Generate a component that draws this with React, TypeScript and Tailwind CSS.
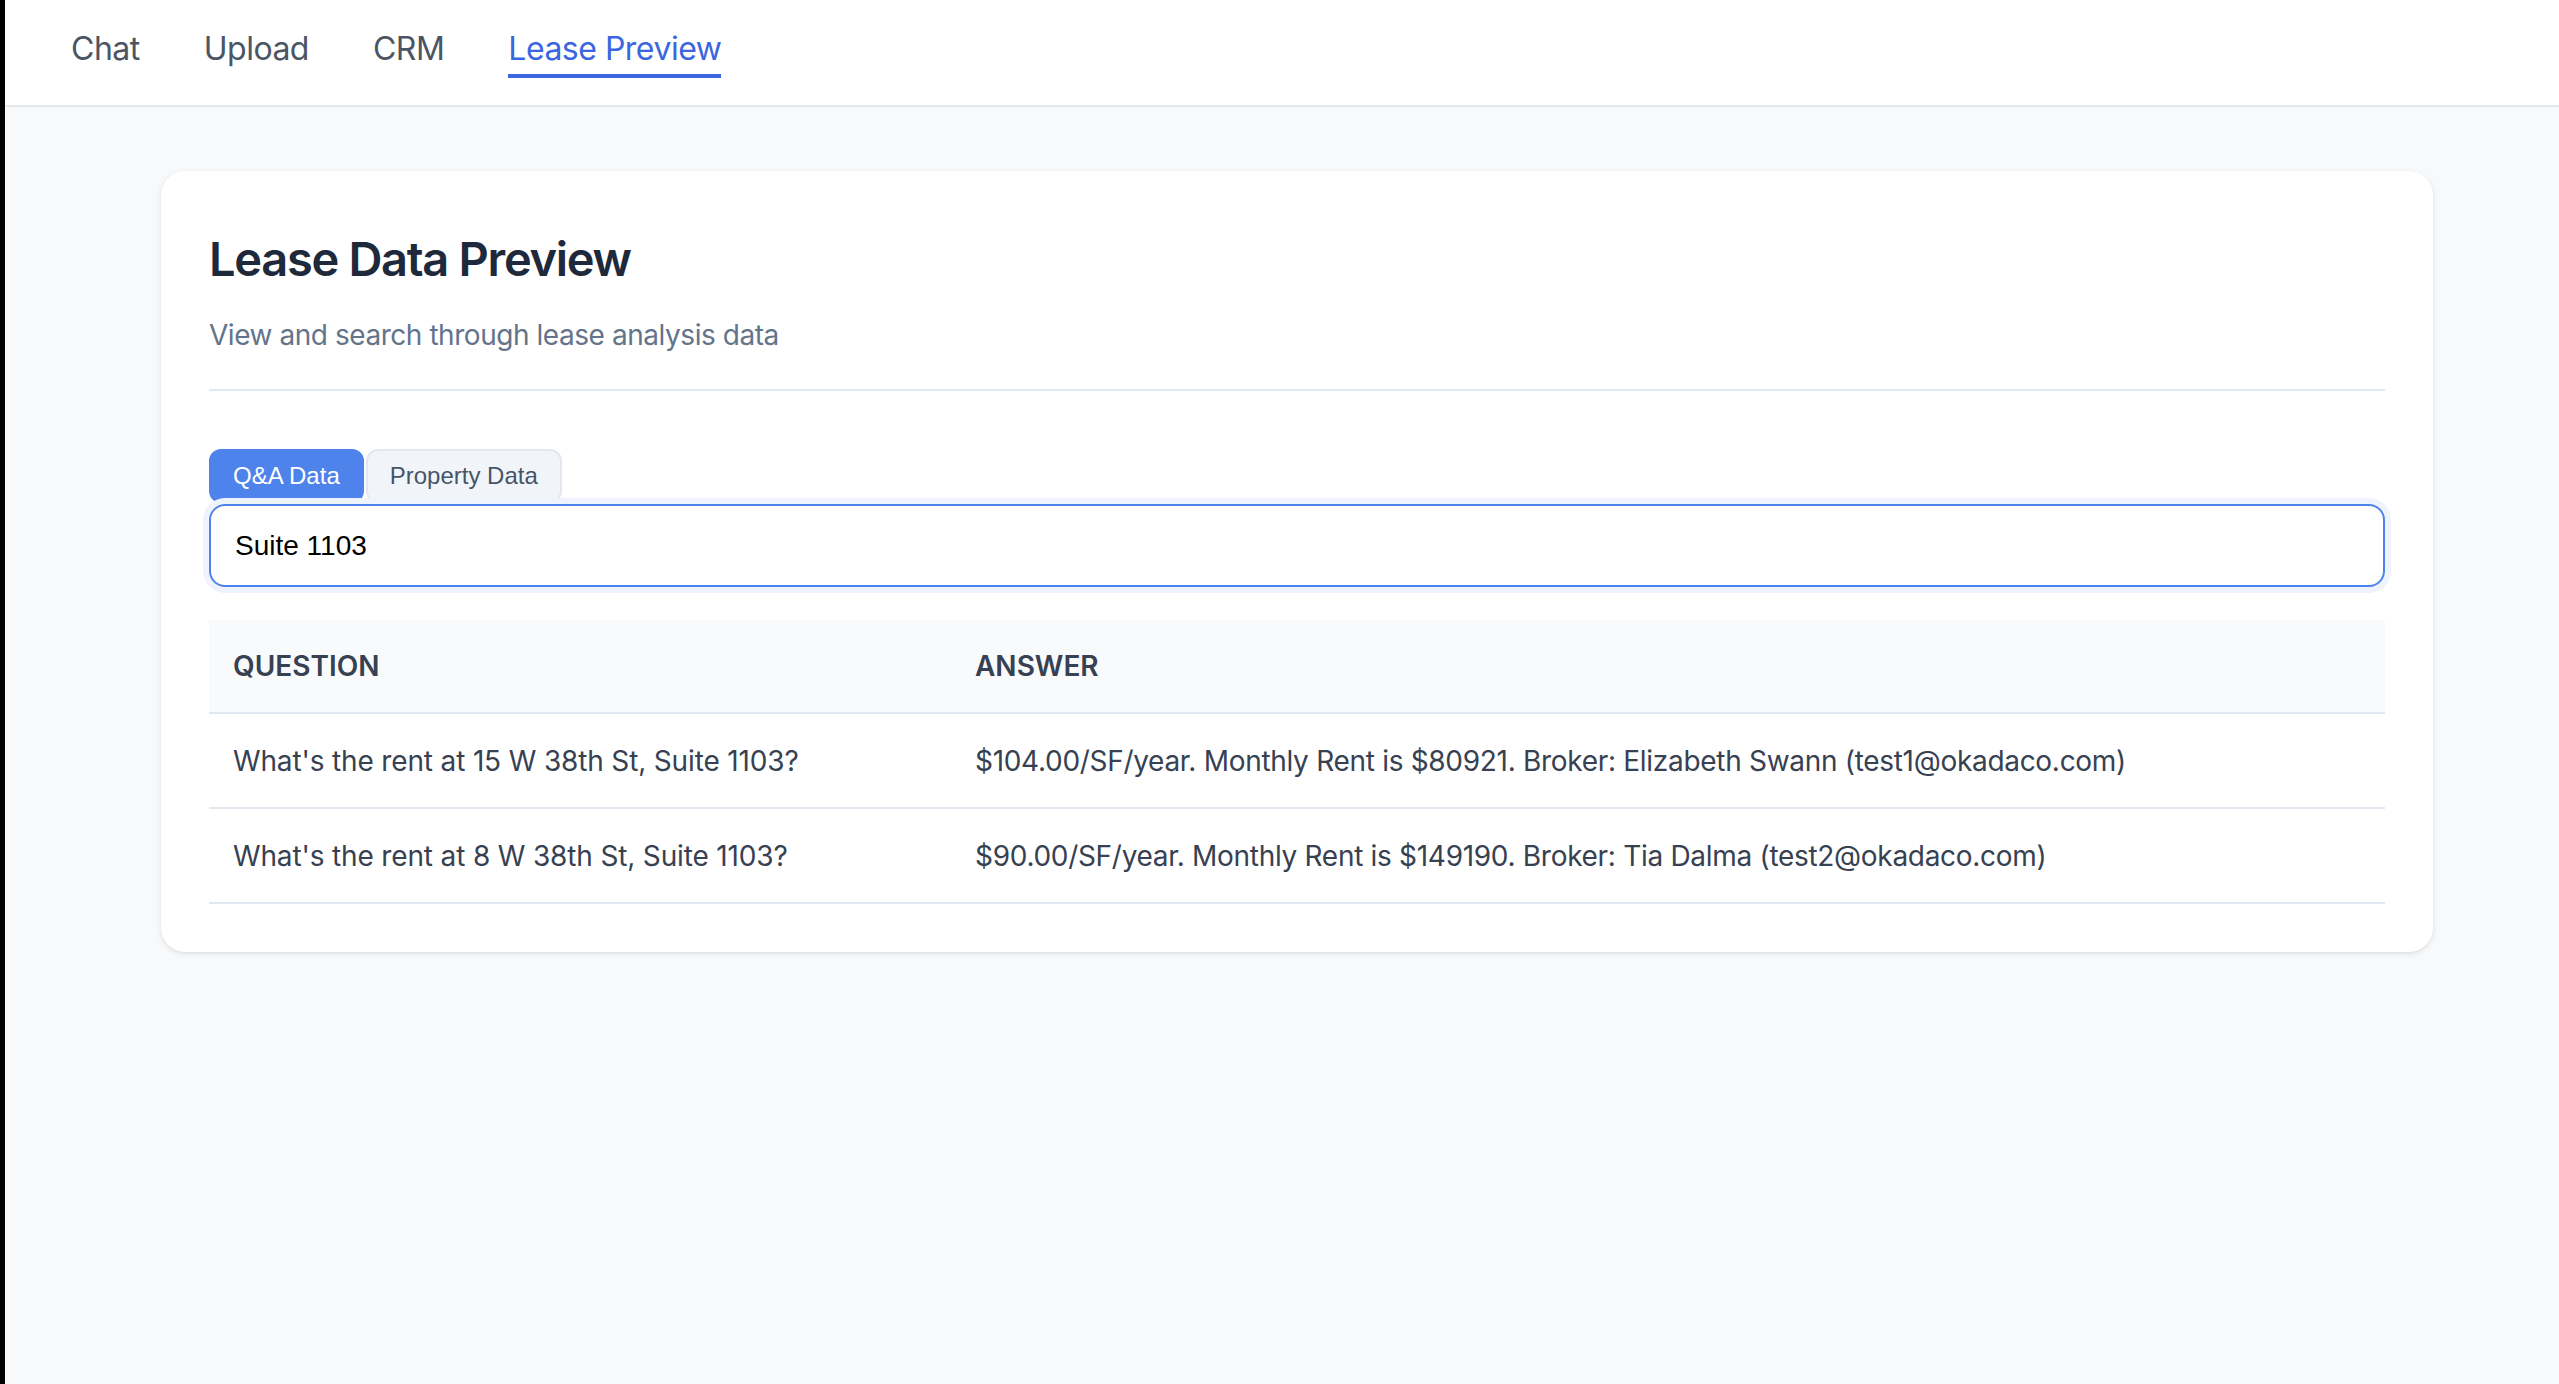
import React, { useState } from 'react';

const navItems = ['Chat', 'Upload', 'CRM', 'Lease Preview'];

const rows = [
  {
    question: "What's the rent at 15 W 38th St, Suite 1103?",
    answer:
      '$104.00/SF/year. Monthly Rent is $80921. Broker: Elizabeth Swann (test1@okadaco.com)',
  },
  {
    question: "What's the rent at 8 W 38th St, Suite 1103?",
    answer: '$90.00/SF/year. Monthly Rent is $149190. Broker: Tia Dalma (test2@okadaco.com)',
  },
];

const App = () => {
  const [active, setActive] = useState('Lease Preview');
  const [tab, setTab] = useState('qa');
  const [query, setQuery] = useState('Suite 1103');

  return (
    <div className="min-h-screen bg-[#f8f9fb] border-l-[5px] border-black font-['Inter',sans-serif]">
      <nav className="h-[107px] bg-white border-b-2 border-[#e5e7eb] flex items-start gap-[64px] pl-[66px]">
        {navItems.map((item) => (
          <button
            key={item}
            onClick={() => setActive(item)}
            className={`pt-[25px] pb-[1px] text-[32px] leading-[48px] tracking-[-0.5px] border-b-4 ${
              active === item
                ? 'text-[#3b66e0] border-[#3b66e0]'
                : 'text-[#4b5563] border-transparent'
            }`}
          >
            {item}
          </button>
        ))}
      </nav>

      <main className="pt-[64px] pl-[156px] pr-[126px]">
        <div className="bg-white rounded-[24px] p-[48px] shadow-[0_2px_6px_rgba(0,0,0,0.08),0_1px_3px_rgba(0,0,0,0.05)]">
          <div className="pb-[34px] border-b-2 border-[#e2e8f0]">
            <h1 className="mt-[8px] text-[47px] leading-[64px] font-semibold text-[#1e293b] tracking-[-1.3px]">
              Lease Data Preview
            </h1>
            <p className="mt-[24px] text-[28px] leading-[40px] text-[#64748b] tracking-[-0.45px]">
              View and search through lease analysis data
            </p>
          </div>

          <div className="mt-[58px] flex gap-[2px] font-['Liberation_Sans',Arial,sans-serif]">
            <button
              onClick={() => setTab('qa')}
              className={`h-[54px] px-[22px] rounded-[12px] border-2 text-[24px] ${
                tab === 'qa'
                  ? 'bg-[#4f83ec] border-[#4f83ec] text-white'
                  : 'bg-[#f1f5fa] border-[#e2e8f0] text-[#475569]'
              }`}
            >
              Q&amp;A Data
            </button>
            <button
              onClick={() => setTab('property')}
              className={`h-[54px] px-[22px] rounded-[12px] border-2 text-[24px] ${
                tab === 'property'
                  ? 'bg-[#4f83ec] border-[#4f83ec] text-white'
                  : 'bg-[#f1f5fa] border-[#e2e8f0] text-[#475569]'
              }`}
            >
              Property Data
            </button>
          </div>

          <input
            value={query}
            onChange={(e) => setQuery(e.target.value)}
            className="mt-[1px] w-full h-[83px] px-[24px] rounded-[16px] border-2 border-[#4f83ec] ring-[6px] ring-[#eef3fd] outline-none text-[28px] text-black font-['Liberation_Sans',Arial,sans-serif]"
          />

          <table className="mt-[33px] w-full border-collapse text-left">
            <thead>
              <tr className="bg-[#f8fafc] border-b-2 border-[#e2e8f0]">
                <th className="w-[742px] px-[24px] py-[26px] text-[28px] leading-[40px] font-semibold uppercase text-[#374151]">
                  Question
                </th>
                <th className="px-[24px] py-[26px] text-[28px] leading-[40px] font-semibold uppercase text-[#374151]">
                  Answer
                </th>
              </tr>
            </thead>
            <tbody>
              {rows.map((row) => (
                <tr key={row.question} className="border-b-2 border-[#e2e8f0]">
                  <td className="px-[24px] py-[26.5px] text-[28px] leading-[40px] text-[#374151] tracking-[-0.15px]">
                    {row.question}
                  </td>
                  <td className="px-[24px] py-[26.5px] text-[28px] leading-[40px] text-[#374151] tracking-[-0.3px]">
                    {row.answer}
                  </td>
                </tr>
              ))}
            </tbody>
          </table>
        </div>
      </main>
    </div>
  );
};

export default App;
